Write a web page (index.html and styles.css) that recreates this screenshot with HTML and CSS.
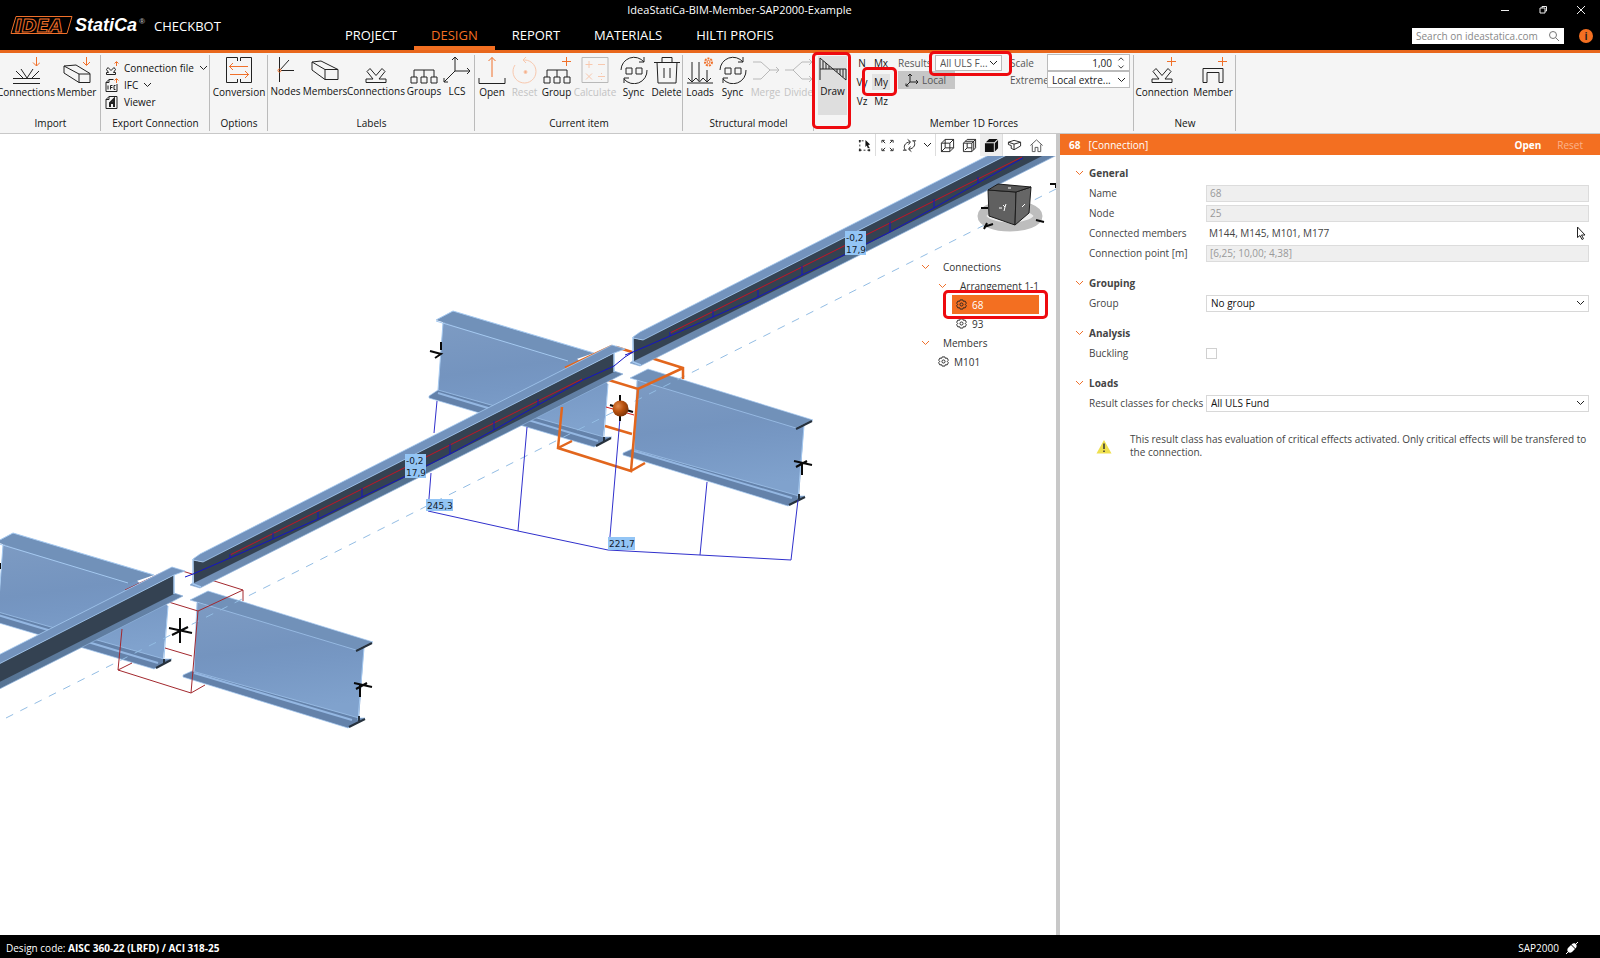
FILE: index.html
```html
<!DOCTYPE html>
<html lang="en">
<head>
<meta charset="utf-8">
<title>IdeaStatiCa-BIM-Member-SAP2000-Example</title>
<link rel="stylesheet" href="styles.css">
</head>
<body>
<svg class="symbols" aria-hidden="true">
  <symbol id="chev" viewBox="0 0 9 6"><path d="M1 1l3.500 3.500L8 1"/></symbol>
  <symbol id="gear" viewBox="0 0 12 12"><path d="M4.500 1h3l.5 1.500 2-.2 1.300 2.500L10 6l1.300 1.300L10 9.700l-2-.2L7.500 11h-3L4 9.500l-2 .2L.7 7.300 2 6 .7 4.800 2 2.300l2 .2z"/><circle cx="6" cy="6" r="1.700"/></symbol>
  <symbol id="sync" viewBox="0 0 28 28"><path d="M1 14A13 13 0 0 1 24 6M24 1v5h-5M27 14A13 13 0 0 1 4 23M4 27v-5h5M6 12h6v6H6zM16 12h6v6h-6z"/></symbol>
</svg>
<header class="topbar">
  <div class="brand">
    <svg class="logo" viewBox="0 0 136 20" role="img" aria-label="IDEA StatiCa">
      <path class="logo-frame" d="M6 1.500H62L57 18.500H1Z"/>
      <text class="logo-idea" x="5" y="16.500">IDEA</text>
      <text class="logo-name" x="65" y="16">StatiCa</text>
      <text class="logo-reg" x="129" y="9">®</text>
    </svg>
    <span class="product">CHECKBOT</span>
  </div>
  <div class="doc-title">IdeaStatiCa-BIM-Member-SAP2000-Example</div>
  <div class="window-buttons">
    <button type="button" aria-label="Minimize"><svg viewBox="0 0 12 12"><path d="M2 6.500H10"/></svg></button>
    <button type="button" aria-label="Restore"><svg viewBox="0 0 12 12"><path d="M3 4h5v5H3zM5 4V2.500h4.500V7H8"/></svg></button>
    <button type="button" aria-label="Close"><svg viewBox="0 0 12 12"><path d="M2 2l8 8M10 2l-8 8"/></svg></button>
  </div>
  <nav class="tabs">
    <a href="#project">PROJECT</a>
    <a href="#design" class="active">DESIGN</a>
    <a href="#report">REPORT</a>
    <a href="#materials">MATERIALS</a>
    <a href="#hilti">HILTI PROFIS</a>
  </nav>
  <div class="search-row">
    <label class="search"><input type="text" aria-label="Search" placeholder="Search on ideastatica.com">
      <svg viewBox="0 0 12 12"><circle cx="5" cy="5" r="3.500"/><path d="M7.500 7.500L11 11"/></svg></label>
    <button type="button" class="info" aria-label="Information">i</button>
  </div>
</header>

<div class="ribbon">
  <section class="group g-import">
    <div class="tools">
      <button type="button"><svg viewBox="0 0 28 28"><path d="M4 15l7 7M9 13l6 9 6-9M27 15l-7 7M1 22.500h27M1 27.500h27"/><path class="o" d="M24.500 1v9M21 6.500l3.500 3.500 3.500-3.500"/></svg>Connections</button>
      <button type="button"><svg viewBox="0 0 28 28"><path d="M1 10l12-1 14 8.500v9H16L1 17zM1 10l15 8h11M16 18v8.500"/><path class="o" d="M23.500 1v8M20 6l3.500 3.500L27 6"/></svg>Member</button>
    </div>
    <h2>Import</h2>
  </section>
  <section class="group g-export">
    <div class="rows">
      <button type="button"><svg viewBox="0 0 14 14"><path d="M1.500 13.500v-2h2l-2-3 1.500-2 3 3 3-3 1.500 2-2 3h2v2z"/><path class="o" d="M11.500 5V1M9.500 2.500l2-2 2 2"/></svg>Connection file<svg class="chev"><use href="#chev"/></svg></button>
      <button type="button"><svg viewBox="0 0 14 14"><path d="M8.500 1.500H4l-3 3v9h11V6M4 1.500v3H1M3 7.500v4M5.500 11.500v-4h2M5.500 9.500h2M10.500 7.500h-1.500v4h1.500"/><path class="o" d="M11.500 5V1M9.500 2.500l2-2 2 2"/></svg>IFC<svg class="chev"><use href="#chev"/></svg></button>
      <button type="button"><svg viewBox="0 0 14 14"><path d="M4 1.500h8v12H1v-9zM4 1.500v3H1"/><path class="heavy" d="M5 12V8l4-4v8M5 8h4"/></svg>Viewer</button>
    </div>
    <h2>Export Connection</h2>
  </section>
  <section class="group g-options">
    <div class="tools">
      <button type="button"><svg viewBox="0 0 28 28"><path d="M12.500 5V1.500h-11v25h11V23M15.500 5V1.500h11v25h-11V23"/><path class="o" d="M23 10.500H4M8 7l-3.500 3.500L8 14M5 18.500h19M20 15l3.500 3.500L20 22"/></svg>Conversion</button>
    </div>
    <h2>Options</h2>
  </section>
  <section class="group g-labels">
    <div class="tools">
      <button type="button"><svg viewBox="0 0 28 28"><path d="M7.500 1v25M9 14.500h13M8 14l9-10"/><circle class="o" cx="7.500" cy="14.500" r="1.500"/></svg>Nodes</button>
      <button type="button"><svg viewBox="0 0 28 28"><path d="M1 6l9-1 17 8.500v10H14L1 14zM1 6l13 7.500h13M14 13.500v10"/></svg>Members</button>
      <button type="button"><svg viewBox="0 0 28 28"><path d="M4 26.500v-3.500h7l-6-7.500 3-3 6 7 6-7 3 3-6 7.500h7v3.500z"/></svg>Connections</button>
      <button type="button"><svg viewBox="0 0 28 28"><path d="M1 21h6v6H1zM11 21h6v6h-6zM21 21h6v6h-6zM4 21v-7h20v7M14 14v7"/></svg>Groups</button>
      <button type="button"><svg viewBox="0 0 28 28"><path d="M12 15V1M9 4l3-3 3 3M12 15h15M24 12l3 3-3 3M12 15L1 26M1 22v4h4"/></svg>LCS</button>
    </div>
    <h2>Labels</h2>
  </section>
  <section class="group g-current">
    <div class="tools">
      <button type="button"><svg viewBox="0 0 28 28"><path d="M1 22v5.500h26V22"/><path class="o" d="M14 21V1.500M10.500 5L14 1.500 17.500 5"/></svg>Open</button>
      <button type="button" disabled><svg viewBox="0 0 28 28"><path class="o" d="M4 9a11.500 11.500 0 1 0 10-5H12M15 1l-3 3 3 3"/><circle class="o fill" cx="14.500" cy="16" r="1.500"/></svg>Reset</button>
      <button type="button"><svg viewBox="0 0 28 28"><path d="M1 21h6v6H1zM11 21h6v6h-6zM21 21h6v6h-6zM4 21v-7h20v7M14 14v7"/><path class="o" d="M23.500 1v9M19 5.500h9"/></svg>Group</button>
      <button type="button" disabled><svg viewBox="0 0 28 28"><path d="M1 1.500h26v25H1z"/><path class="o" d="M8 5v7M4.500 8.500h7M17 8.500h7M5 17.500l6 6M11 17.500l-6 6M17 20.500h7M20.500 17v1M20.500 23v1"/></svg>Calculate</button>
      <button type="button"><svg><use href="#sync"/></svg>Sync</button>
      <button type="button"><svg viewBox="0 0 28 28"><path d="M4 6l1 21h18l1-21M1 6.500h26M9 6V1.500h10V6M11 12v10M17 12v10"/></svg>Delete</button>
    </div>
    <h2>Current item</h2>
  </section>
  <section class="group g-structural">
    <div class="tools">
      <button type="button"><svg viewBox="0 0 28 28"><path d="M6 6v19M2 22l4 4 4-4M13 6v19M10 22l3.500 4 3.500-4M21 14v11M17 22l4 4 4-4M1 27h26"/><circle class="o thick" cx="22.500" cy="6" r="3.500"/><circle class="o" cx="22.500" cy="6" r="1.500"/></svg>Loads</button>
      <button type="button"><svg><use href="#sync"/></svg>Sync</button>
      <button type="button" disabled><svg viewBox="0 0 28 28"><path d="M1 6h8l9 8-9 9H1M18 14h9M24 11l3 3-3 3"/></svg>Merge</button>
      <button type="button" disabled><svg viewBox="0 0 28 28"><path d="M0 14h8l9-8h10M8 14l9 9h10M24 3l3 3-3 3M24 20l3 3-3 3"/></svg>Divide</button>
    </div>
    <h2>Structural model</h2>
  </section>
  <section class="group g-forces">
    <div class="forces">
      <button type="button" class="draw"><svg viewBox="0 0 28 28"><path d="M1 24V2l26 22V13H1M4 5v8M7 7v6M10 10v3M18 13v3M21 13v6M24 13v8"/></svg>Draw<span class="callout"></span></button>
      <div class="components">
        <button type="button">N</button><button type="button">Mx</button>
        <button type="button">Vy</button><button type="button" class="on">My<span class="callout"></span></button>
        <button type="button">Vz</button><button type="button">Mz</button>
      </div>
      <div class="results">
        <div class="line"><label for="results">Results</label>
          <span class="pick"><select id="results"><option>All ULS F...</option></select><svg class="chev"><use href="#chev"/></svg><span class="callout"></span></span></div>
        <button type="button" class="local"><svg viewBox="0 0 14 14"><path d="M5 9V1M3 3l2-2 2 2M5 9h8M11 7l2 2-2 2M5 9l-4 4M1 10.500V13h2.500"/></svg>Local</button>
      </div>
      <div class="scale">
        <label for="scale">Scale</label>
        <span class="pick"><input id="scale" type="text" value="1,00"><svg class="spin" viewBox="0 0 8 14"><path d="M1 4l3-3 3 3M1 10l3 3 3-3"/></svg></span>
        <label for="extreme">Extreme</label>
        <span class="pick"><select id="extreme"><option>Local extre...</option></select><svg class="chev"><use href="#chev"/></svg></span>
      </div>
    </div>
    <h2>Member 1D Forces</h2>
  </section>
  <section class="group g-new">
    <div class="tools">
      <button type="button"><svg viewBox="0 0 28 28"><path d="M4 26.500v-3.500h7l-6-7.500 3-3 6 7 6-7 3 3-6 7.500h7v3.500z"/><path class="o" d="M23.500 1v9M19 5.500h9"/></svg>Connection</button>
      <button type="button"><svg viewBox="0 0 28 28"><path d="M4 26.500v-14h20v14h-4v-10H8v10z"/><path class="o" d="M23.500 1v9M19 5.500h9"/></svg>Member</button>
    </div>
    <h2>New</h2>
  </section>
</div>

<main class="work">
  <section class="viewport">
    <svg class="scene" viewBox="0 134 1056 801" preserveAspectRatio="xMinYMin slice" role="img" aria-label="Structural model">
      <defs>
        <linearGradient id="web" x1="0" y1="0" x2="0.200" y2="1"><stop offset="0" stop-color="#7d9bc3"/><stop offset=".45" stop-color="#7494bf"/><stop offset=".6" stop-color="#7697c3"/><stop offset="1" stop-color="#80a2cd"/></linearGradient>
        <linearGradient id="low" x1="0" y1="0" x2="1" y2="0"><stop offset="0" stop-color="#7593ba"/><stop offset=".5" stop-color="#53708f"/><stop offset="1" stop-color="#6684aa"/></linearGradient>
        <radialGradient id="ball" cx=".35" cy=".35" r=".7"><stop offset="0" stop-color="#e08a4c"/><stop offset=".5" stop-color="#b9520f"/><stop offset="1" stop-color="#7a3206"/></radialGradient>
        <g id="girderL">
          <path fill="url(#web)" d="M443 322L576 358 608 384 603 439 438 391z"/>
          <path fill="#6482aa" stroke="#a5c9f0" stroke-width=".7" d="M429 396L438 390 604 437 612 437 594 447 429 398z"/>
          <path fill="none" stroke="#94b7e2" stroke-width="2" d="M438 393L598 441"/>
          <path fill="#7191b9" d="M436 320L453 311 594 353 568 362z"/>
          <path fill="none" stroke="#a5c9f0" d="M436 321L568 361M453 311L594 353M436 320L453 311M443 323L438 390M608 384L604 436"/>
          <path stroke="#26313d" stroke-width="2" d="M596 446L611 438M604 437v4"/>
        </g>
        <g id="girderR">
          <path fill="url(#web)" d="M637 380L804 425 799 498 634 450z"/>
          <path fill="#6482aa" stroke="#a5c9f0" stroke-width=".7" d="M623 453L632 449 799 496 805 496 788 506 623 455z"/>
          <path fill="none" stroke="#94b7e2" stroke-width="2" d="M634 451L792 498"/>
          <path fill="#7191b9" stroke="#a5c9f0" stroke-width=".7" d="M630 378L648 369 813 420 796 428z"/>
          <path fill="none" stroke="#a5c9f0" d="M637 381L634 449M804 426L798 498"/>
          <path stroke="#26313d" stroke-width="2" d="M796 429L812 421M789 505L805 497M799 494v5"/>
        </g>
        <g id="beam">
          <path fill="url(#low)" stroke="#8fb3dc" stroke-width=".7" d="M630 363L640 366 840 265 1063 152 1054 149 840 256 634 360z"/>
          <path fill="#344252" d="M633 338L642 340 1054 131V150L840 258 634 361z"/>
          <path fill="#7393bd" stroke="#a5c9f0" stroke-width=".8" d="M633 337L640 332 1052 123 1065 127 1054 131 643 340 633 338z"/>
          <path fill="none" stroke="#a5c9f0" stroke-width="1.500" d="M633 337V362L641 365M1054 131V150"/>
        </g>
        <path id="box" fill="none" d="M565 368L612 346M616 347L683 368V379M683 368L638 389 602 378M638 389L631 471 558 448 562 407M558 448L572 441M631 471L645 463M605 426L632 434"/>
        <g id="forces" fill="none">
          <path stroke="#c41425" d="M670 333L1022 157"/>
          <path stroke="#1414c4" d="M625 355L633 352 670 336 713 317 758 297 802 275 846 254 890 232 934 208 978 183 1023 158M670 336v-4M713 317v-6M758 297v-7M802 275v-9M846 254v-10M890 232v-10M934 208v-9M978 183v-6"/>
        </g>
      </defs>
      <use href="#girderL" x="-440" y="222"/>
      <use href="#girderR" x="-440" y="222"/>
      <use href="#girderL"/>
      <use href="#girderR"/>
      <path d="M6 718L1056 189" fill="none" stroke="#93bde4" stroke-dasharray="8 8"/>
      <use href="#box" x="-440" y="222" stroke="#a3282e"/>
      <use href="#beam" x="-880" y="444"/>
      <use href="#box" stroke="#e2661d" stroke-width="2.500"/>
      <use href="#beam" x="-440" y="222"/>
      <use href="#forces" x="-440" y="222"/>
      <use href="#beam"/>
      <use href="#forces"/>
      <path fill="none" stroke="#1414c4" d="M583 380L614 366 625 357 633 352"/>
      <path fill="none" stroke="#3030cc" d="M437 401L434 433M431 473L428 511 518 531 608 550 700 555 791 560 798 500M527 427L518 531M620 418L609 548M707 482L700 555"/>
      <path stroke="#d01c1c" fill="none" d="M606 407L634 415"/>
      <path class="axis" d="M620 395v26M610 405l23 7M430 351l11 3-6 4M441 342v8M794 461l18 4M796 467l11-6M802 463v12M180 618v25M169 628l23 5M172 635l16-8M354 683l18 4M356 689l11-6M360 685v12M0 563v6"/>
      <circle cx="620.500" cy="408.500" r="8" fill="url(#ball)"/>
      <g class="tags">
        <path d="M405 454h21v24h-21zM845 231h21v24h-21zM426 499h27v12h-27zM608 537h27v13h-27z"/>
        <text x="406" y="464">-0,2</text><text x="406" y="476">17,9</text>
        <text x="846" y="241">-0,2</text><text x="846" y="253">17,9</text>
        <text x="427" y="509">245,3</text><text x="609" y="547">221,7</text>
      </g>
      <g>
        <ellipse cx="1010" cy="216" rx="28" ry="11" fill="#ececec" stroke="#bdbdbd" stroke-width="9"/>
        <path fill="#606060" stroke="#1c1c1c" d="M988 190L1016 192 1015 225 989 216z"/>
        <path fill="#666" stroke="#1c1c1c" d="M1016 192L1031 187 1029 213 1015 225z"/>
        <path fill="#555" stroke="#1c1c1c" d="M988 190L998 184 1031 187 1016 192z"/>
        <path stroke="#fff" fill="none" d="M999 208h3M1003 205l2 2 1-3M1005 207l-1 4M1022 207l3-3M1008 188h3"/>
        <path class="axis" d="M981 208h7M984 227l9-3M987 223l-3 6M1036 220l8 2M1050 184h6v4"/>
      </g>
    </svg>
    <div class="view-tools">
      <button type="button" aria-label="Select"><svg viewBox="0 0 16 16"><path stroke-dasharray="2 2" d="M3 13V3h6M3 13h10v-3"/><path class="fill" d="M9 2l5 5-2 .5 1 3-1.500.5-1-3L9 9.500z"/><path class="dots" d="M2 3h2M2 13h2M12 13h2"/></svg></button>
      <i></i>
      <button type="button" aria-label="Zoom all"><svg viewBox="0 0 16 16"><path d="M2 5V2.500h3M11 2.500h3V5M2 11v2.500h3M14 11v2.500h-3M3 3l2.500 2.500M13 3l-2.500 2.500M3 13l2.500-2.500M13 13l-2.500-2.500"/></svg></button>
      <button type="button" aria-label="Rotate"><svg viewBox="0 0 16 16"><path d="M3.500 13C1 9 3 5 8.500 4M6 1.500L9 4 7 7M12.500 3c2.500 4 .5 8-5 9M10 14.500L7 12l2-3M1 13h4M11 3h4"/></svg></button>
      <button type="button" class="slim" aria-label="More"><svg class="chev"><use href="#chev"/></svg></button>
      <i></i>
      <button type="button" aria-label="Wireframe"><svg viewBox="0 0 16 16"><path d="M1.500 5.500h9v9h-9zM1.500 5.500l4-4h9v9l-4 4M10.500 5.500l4-4M5.500 1.500v9h9M1.500 14.500l4-4"/></svg></button>
      <button type="button" aria-label="Transparent"><svg viewBox="0 0 16 16"><path d="M1.500 5.500h9v9h-9zM1.500 5.500l4-4h9v9l-4 4M10.500 5.500l4-4M5.500 5.500v5h5M3 13l2.500-2.500M3.500 3.500h9v9"/></svg></button>
      <button type="button" class="on" aria-label="Solid"><svg viewBox="0 0 16 16"><path class="fill" d="M1 5.500h9.500V15H1zM2 4.500L5.500 1h9L11 4.500zM11.500 5.500L15 2v9l-3.500 3.500z"/></svg></button>
      <i></i>
      <button type="button" aria-label="Section view"><svg viewBox="0 0 16 16"><path d="M1.500 4.500l6 2v6l-3-1.500V8l-3-1zM7.500 6.500l7-2v4l-7 4M1.500 4.500l6-2 7 2"/></svg></button>
      <button type="button" aria-label="Home"><svg viewBox="0 0 16 16"><path class="soft" d="M1.500 8L8 2l6.500 6M3.500 7v7.500h3V10h3v4.500h3V7"/></svg></button>
    </div>
    <ul class="tree">
      <li class="l1"><svg class="chev o"><use href="#chev"/></svg>Connections</li>
      <li class="l2"><svg class="chev o"><use href="#chev"/></svg>Arrangement 1-1</li>
      <li class="l3 selected"><svg><use href="#gear"/></svg>68<span class="callout"></span></li>
      <li class="l3"><svg><use href="#gear"/></svg>93</li>
      <li class="l1"><svg class="chev o"><use href="#chev"/></svg>Members</li>
      <li class="l2b"><svg><use href="#gear"/></svg>M101</li>
    </ul>
  </section>

  <aside class="panel">
    <div class="panel-head"><b>68</b><span>[Connection]</span><button type="button">Open</button><button type="button" disabled>Reset</button></div>
    <div class="form">
      <h3><svg class="chev o"><use href="#chev"/></svg>General</h3>
      <label for="name">Name</label><input id="name" type="text" value="68" disabled>
      <label for="node">Node</label><input id="node" type="text" value="25" disabled>
      <label for="members">Connected members</label>
      <div class="plain"><output id="members">M144, M145, M101, M177</output><svg viewBox="0 0 10 14"><path d="M1.500 1v10.500l2.500-2 2 4 1.500-.8-2-3.700H9z"/></svg></div>
      <label for="point">Connection point [m]</label><input id="point" type="text" value="[6,25; 10,00; 4,38]" disabled>
      <h3><svg class="chev o"><use href="#chev"/></svg>Grouping</h3>
      <label for="group">Group</label><span class="pick"><select id="group"><option>No group</option></select><svg class="chev"><use href="#chev"/></svg></span>
      <h3><svg class="chev o"><use href="#chev"/></svg>Analysis</h3>
      <label for="buckling">Buckling</label><input id="buckling" type="checkbox">
      <h3><svg class="chev o"><use href="#chev"/></svg>Loads</h3>
      <label for="classes">Result classes for checks</label><span class="pick"><select id="classes"><option>All ULS Fund</option></select><svg class="chev"><use href="#chev"/></svg></span>
    </div>
    <div class="warning"><svg viewBox="0 0 16 15"><path fill="#efe04e" d="M8 1l7.500 13.500H.5z"/><path stroke="#333" stroke-width="1.500" d="M8 4.500v5.500M8 11.500v1.500"/></svg>
      <p>This result class has evaluation of critical effects activated. Only critical effects will be transfered to the connection.</p></div>
  </aside>
</main>

<footer class="status">
  <span>Design code: <b>AISC 360-22 (LRFD) / ACI 318-25</b></span>
  <span class="link">SAP2000 <svg viewBox="0 0 14 14"><path fill="#fff" d="M3 7l3-3 4 4-3 3c-3 2-6-1-4-4zM7 3c3-2 6 1 4 4l-.5.500-4-4z"/><path stroke="#fff" d="M1 13l3-3M10 4l3-3"/></svg></span>
</footer>
</body>
</html>
```
FILE: styles.css
```css
* { box-sizing: border-box; }
body {
  margin: 0; min-height: 100vh; display: flex; flex-direction: column;
  font-family: "Open Sans", "Noto Sans", sans-serif; font-size: 10px; color: #222; background: #fff;
}
button, input, select { font: inherit; color: inherit; margin: 0; padding: 0; border: 0; background: none; border-radius: 0; }
select { appearance: none; }
h2, h3, p, ul { margin: 0; padding: 0; font-size: inherit; font-weight: normal; list-style: none; }
svg { fill: none; stroke: #222; flex: none; }
svg .o, svg.o { stroke: #f0702a; }
svg .fill { fill: #111; stroke: none; }
.symbols { display: none; }

.topbar {
  display: grid; grid-template-columns: 328px 823fr 449px; grid-template-rows: 20px 30px;
  background: #000; color: #fff; border-bottom: 3px solid #e8671c;
}
.brand { grid-row: 1 / 3; display: flex; align-items: center; gap: 8px; padding-left: 10px; }
.logo { width: 136px; height: 20px; }
.logo-frame { stroke: #f0702a; fill: #000; stroke-width: 1; }
.logo text { font-family: "Liberation Sans", sans-serif; font-weight: bold; font-style: italic; }
.logo .logo-idea { font-family: "DejaVu Sans", sans-serif; font-size: 18px; fill: #000; stroke: #f0702a; }
.logo-name { font-size: 18px; fill: #fff; stroke: none; }
.logo .logo-reg { font-size: 8px; fill: #aaa; stroke: none; }
.product { font-size: 13px; padding-top: 2px; }
.doc-title { text-align: center; font-size: 11px; line-height: 20px; }
.window-buttons { display: flex; justify-content: flex-end; }
.window-buttons button { width: 38px; display: grid; place-items: center; }
.window-buttons svg { width: 12px; height: 12px; stroke: #eee; }
.tabs { display: flex; font-size: 13px; line-height: 30px; }
.tabs a { color: #fff; text-decoration: none; padding: 0 17px; }
.tabs .active { color: #f36f21; border-bottom: 4px solid #f36f21; }
.search-row { display: flex; justify-content: flex-end; align-items: center; gap: 15px; padding: 2px 7px 0 0; }
.search { display: flex; align-items: center; width: 152px; height: 16px; background: #fff; padding: 0 4px; }
.search input { flex: 1; min-width: 0; }
.search input::placeholder { color: #888; opacity: 1; }
.search svg { width: 12px; height: 12px; stroke: #777; }
.info { width: 14px; height: 14px; border-radius: 50%; background: #f36f21; color: #222; font-weight: bold; line-height: 14px; }

.ribbon { display: flex; background: #f5f5f5; border-bottom: 1px solid #c8c8c8; height: 81px; color: #111; }
.group { display: grid; grid-template-rows: 59px 21px; position: relative; flex: none; }
.group::after { content: ""; position: absolute; right: 0; top: 2px; bottom: 2px; width: 1px; background: #bbb; }
.group h2 { text-align: center; line-height: 23px; }
.tools { display: grid; padding-top: 3px; }
.tools button { display: flex; flex-direction: column; align-items: center; white-space: nowrap; line-height: 16px; width: 100%; min-width: 0; }
.tools svg, .draw svg { width: 28px; height: 28px; }
.tools button:disabled { color: #c3c3c3; }
.tools button:disabled svg { stroke: #b9b9b9; }
.tools button:disabled .o { stroke: #f8c8ae; }
.tools button:disabled .o.fill { fill: #f5b08a; }
svg .thick { stroke-width: 2; stroke-dasharray: 2 1; }
.g-import .tools { grid-template-columns: 52px 49px; }
.g-export { width: 109px; }
.g-options .tools { grid-template-columns: 58px; }
.g-labels { width: 207px; }
.g-labels .tools { grid-template-columns: 35px 44px 58px 38px 28px; }
.g-labels .tools button { line-height: 14px; }
.g-current .tools { grid-template-columns: 34px 31px 33px 44px 33px 33px; }
.g-structural .tools { grid-template-columns: 34px 31px 35px 31px; }
.g-new .tools { grid-template-columns: 56px 46px; }
.rows { padding: 6px 0 0 4px; display: flex; flex-direction: column; align-items: flex-start; }
.rows button { display: flex; align-items: center; gap: 5px; height: 17px; white-space: nowrap; }
.rows svg { width: 14px; height: 14px; }
.rows svg .heavy { stroke-width: 2; }

.callout { position: absolute; border: 3px solid #ee0a0f; border-radius: 5px; pointer-events: none; z-index: 2; }
.forces { display: flex; padding-left: 4px; width: 320px; align-items: flex-start; }
.draw { position: relative; width: 29px; height: 59px; margin-top: 3px; background: #dedede; display: flex; flex-direction: column; align-items: center; line-height: 14px; }
.draw .callout { inset: -4px -4px -14px -6px; }
.components { display: grid; grid-template-columns: 20px 18px; grid-auto-rows: 19px; margin-left: 5px; }
.components button { position: relative; }
.components .on { background: #e4e4e4; height: 16px; align-self: center; }
.components .callout { inset: -7px -7px -6px -10px; }
.results { margin: 2px 0 0 8px; width: 112px; color: #555; }
.results .line { display: grid; grid-template-columns: 37px 67px; height: 16px; align-items: center; }
.pick { position: relative; display: grid; grid-template-columns: 1fr 16px; align-items: center; border: 1px solid #bbb; background: #fff; }
.pick select, .pick input { grid-area: 1 / 1 / 2 / 3; width: 100%; height: 100%; padding: 0 0 0 4px; min-width: 0; }
.pick svg { grid-area: 1 / 2; pointer-events: none; z-index: 1; justify-self: center; }
.results .pick { height: 16px; }
.results .callout { inset: -5px -11px -6px -7px; }
.local { display: flex; align-items: center; gap: 3px; width: 57px; height: 18px; background: #c6c6c6; padding-left: 7px; }
.local svg { width: 14px; height: 14px; }
.scale { display: grid; grid-template-columns: 37px 83px; grid-template-rows: 17px 17px; margin-top: 1px; align-items: center; color: #555; white-space: nowrap; }
.scale .pick { height: 17px; color: #222; }
.scale input { text-align: right; padding-right: 17px; }
.scale .spin { width: 8px; height: 12px; }

.work { flex: 1; display: grid; grid-template-columns: 1056fr 544fr; }
.viewport { position: relative; overflow: hidden; }
.scene { position: absolute; inset: 0; width: 100%; height: 100%; stroke: none; }
.scene .axis { stroke: #0a0a0a; stroke-width: 2; }
.tags path { fill: #93c5f5; }
.tags text { fill: #14202c; font-family: "DejaVu Sans", sans-serif; font-size: 9px; }
.view-tools { position: relative; display: flex; justify-content: flex-end; height: 22px; background: #fff; padding-right: 9px; }
.view-tools button { width: 22px; display: grid; place-items: center; }
.view-tools .slim { width: 15px; }
.view-tools .on { background: #eee; }
.view-tools i { width: 1px; background: #ddd; }
.view-tools svg { width: 15px; height: 15px; }
.view-tools .soft { stroke: #555; }
.view-tools .dots { stroke-width: 2; }
.tree { position: relative; margin: 101px 17px 0 auto; width: 118px; color: #333; }
.tree li { display: flex; align-items: center; height: 19px; gap: 5px; white-space: nowrap; }
.tree svg { width: 11px; height: 11px; }
.tree .l1 { gap: 13px; }
.tree .l2 { padding-left: 17px; gap: 13px; }
.tree .l3 { padding-left: 35px; }
.tree .l2b { padding-left: 17px; }
.tree .selected { position: relative; margin-left: 31px; padding-left: 4px; background: #f36f21; color: #fff; }
.tree .selected .callout { inset: -5px -9px; }

.panel { border-left: 4px solid #c8c8c8; color: #444; }
.panel-head { display: flex; align-items: center; height: 21px; background: #f36f21; color: #fff; padding: 0 17px 0 9px; gap: 8px; }
.panel-head button:first-of-type { margin-left: auto; font-weight: bold; }
.panel-head button:disabled { color: #fbb48c; margin-left: 8px; }
.form { display: grid; grid-template-columns: 117px 1fr; align-items: center; line-height: 20px; padding: 0 11px 0 29px; margin-top: -2px; }
.form h3 { grid-column: 1 / 3; display: flex; align-items: center; gap: 5px; font-weight: bold; margin-left: -14px; height: 30px; padding-top: 10px; }
.form label { white-space: nowrap; }
.form > input[type=text] { height: 17px; width: 100%; border: 1px solid #dcdcdc; background: #efefef; color: #999; padding: 0 3px; }
.form .pick { height: 17px; border-color: #d8d8d8; color: #111; line-height: 15px; }
.form input[type=checkbox] { appearance: none; width: 11px; height: 11px; border: 1px solid #d0d0d0; }
.plain { display: flex; justify-content: space-between; align-items: center; padding: 0 3px; }
.plain svg { width: 10px; height: 14px; fill: #fff; }
.warning { display: flex; align-items: center; gap: 18px; padding: 20px 0 0 36px; }
.warning svg { width: 16px; height: 15px; stroke: none; }
.warning p { line-height: 13px; }

.status { display: flex; justify-content: space-between; align-items: center; height: 23px; background: #000; color: #fff; padding: 3px 21px 0 6px; }
.link { display: flex; align-items: center; gap: 6px; }
.link svg { width: 14px; height: 14px; stroke: none; }

svg.chev, .rows svg.chev, .view-tools svg.chev, .tree svg.chev { width: 9px; height: 6px; }
```
